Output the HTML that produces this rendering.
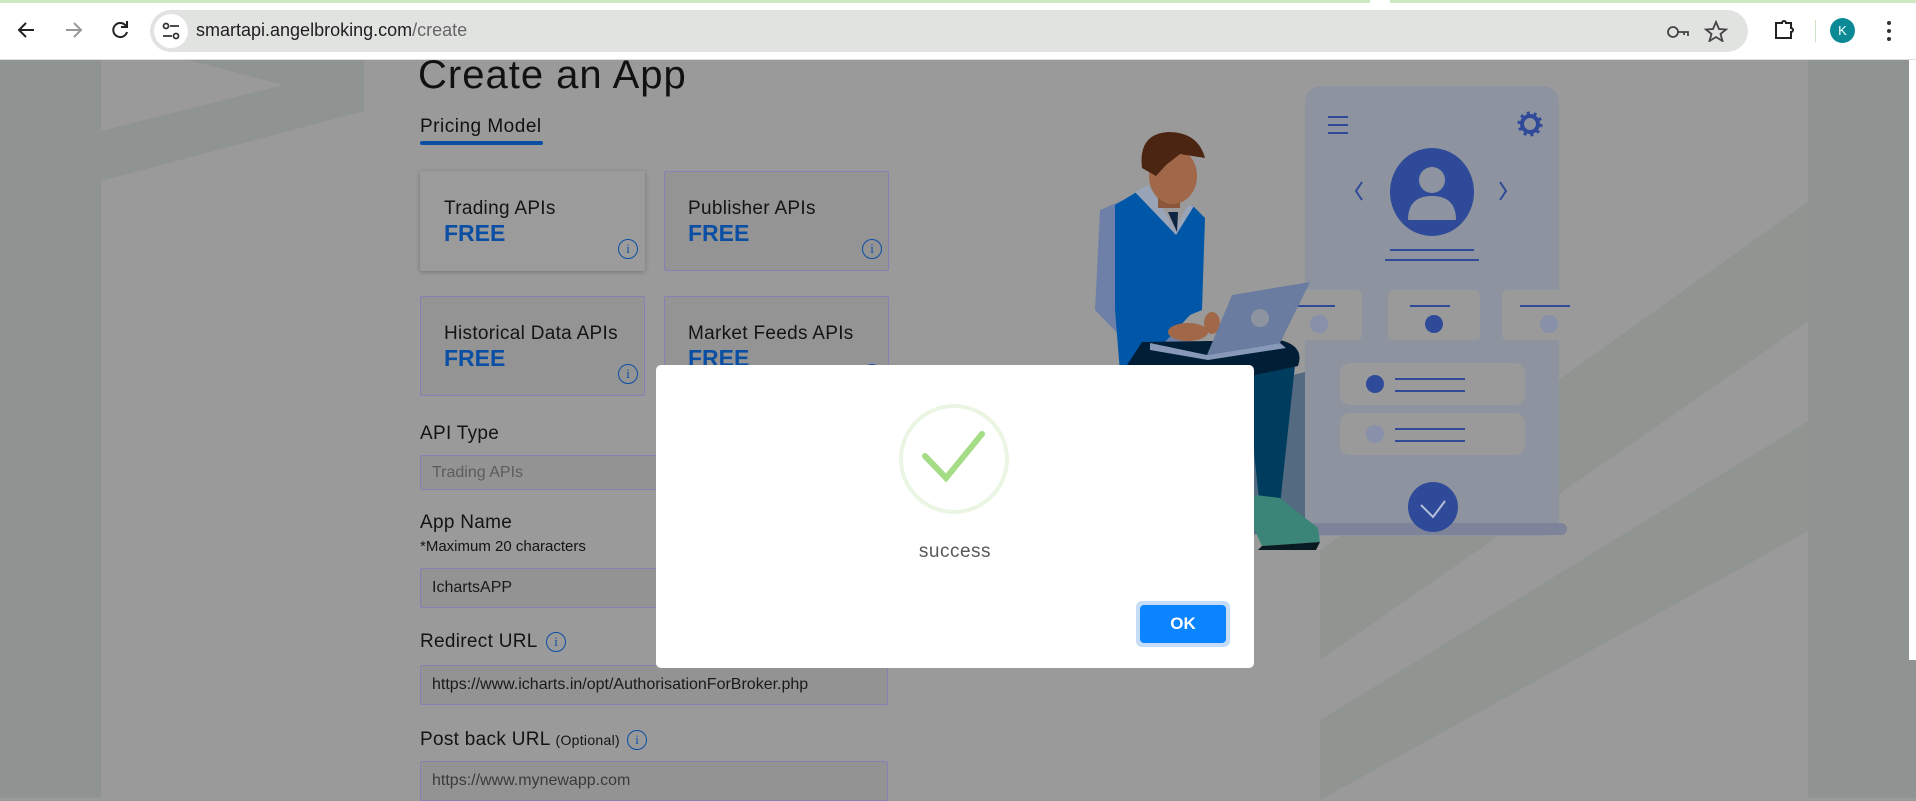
<!DOCTYPE html>
<html><head><meta charset="utf-8"><style>
*{margin:0;padding:0;box-sizing:border-box}
body{width:1916px;height:798px;overflow:hidden;background:#9a9a9a;font-family:"Liberation Sans",sans-serif;position:relative}
.abs{position:absolute}
.card{position:absolute;width:225px;height:100px;border:1px solid #8581b5;background:#949494;border-radius:2px}
.card .t{position:absolute;left:23px;top:26px;font-size:19px;color:#141414;letter-spacing:.3px}
.card .f{position:absolute;left:23px;top:48px;font-size:23px;color:#0b4fa5;font-weight:bold}
.info{position:absolute;width:20px;height:20px;border:1.6px solid #0b4fa5;border-radius:50%;color:#0b4fa5;font-size:13px;text-align:center;line-height:17px;font-family:"Liberation Serif",serif}
.lbl{position:absolute;left:420px;font-size:19px;color:#141414;letter-spacing:.3px}
.inp{position:absolute;left:420px;width:468px;height:40px;border:1px solid #8581b5;background:#939393;border-radius:2px;font-size:16px;color:#1a1a1a;padding-left:11px;line-height:38px}
</style></head><body>
<div class="abs" style="left:0;top:60px;width:101px;height:738px;background:#8f9391"></div>
<svg class="abs" style="left:0;top:0" width="400" height="200"><polygon points="185,59 364,59 364,111 101,181 101,131 283,85" fill="#8f9391"/></svg>
<div class="abs" style="left:1808px;top:60px;width:108px;height:738px;background:#8f9391"></div>
<svg class="abs" style="left:1240px;top:200px" width="570" height="600"><polygon points="80,350 570,0 570,120 80,460" fill="#919592"/><polygon points="80,520 570,220 570,330 80,600" fill="#919592"/></svg>

<div class="abs" style="left:0;top:0;width:1916px;height:60px;background:#fff;border-bottom:1px solid #ddd"></div>
<div class="abs" style="left:0;top:0;width:1370px;height:3px;background:#cfe8c4"></div>
<div class="abs" style="left:1390px;top:0;width:526px;height:3px;background:#cfe8c4"></div>
<svg class="abs" style="left:14px;top:18px" width="130" height="24" fill="none" stroke-width="2">
<path d="M20 12H6M12 5l-7 7 7 7" stroke="#222"/>
<path d="M52 12h14M60 5l7 7-7 7" stroke="#999"/>
<path d="M112 8a7 7 0 1 0 1 6M113 3v6h-6" stroke="#222"/></svg>
<div class="abs" style="left:150px;top:10px;width:1598px;height:42px;background:#e1e3e1;border-radius:21px"></div>
<div class="abs" style="left:154px;top:14px;width:34px;height:34px;background:#fff;border-radius:50%"></div>
<svg class="abs" style="left:162px;top:22px" width="18" height="18" fill="none" stroke="#333" stroke-width="1.8"><circle cx="4" cy="4" r="2.5"/><path d="M8 4h9M1 14h9"/><circle cx="14" cy="14" r="2.5"/></svg>
<div class="abs" style="left:196px;top:20px;font-size:18px;color:#1f1f1f">smartapi.angelbroking.com<span style="color:#666">/create</span></div>
<svg class="abs" style="left:1666px;top:20px" width="110" height="22" fill="none" stroke="#444" stroke-width="1.8">
<circle cx="7" cy="12" r="5"/><path d="M12 12h10v4M18 12v3"/>
<path d="M50 2l3 7 7 .5-5.5 4.5 2 7-6.5-4-6.5 4 2-7L40 9.5l7-.5z"/></svg>
<svg class="abs" style="left:1772px;top:18px" width="24" height="24" fill="none" stroke="#222" stroke-width="2"><path d="M4 5h6a2 2 0 0 1 4 0h5v5a2 2 0 0 1 0 4v6H4z"/></svg>
<div class="abs" style="left:1815px;top:20px;width:1px;height:22px;background:#cfe3c4"></div>
<div class="abs" style="left:1830px;top:18px;width:25px;height:25px;border-radius:50%;background:#0b8a96;color:#fff;font-size:13px;text-align:center;line-height:25px">K</div>
<svg class="abs" style="left:1884px;top:18px" width="10" height="26" fill="#333"><circle cx="5" cy="5" r="2"/><circle cx="5" cy="13" r="2"/><circle cx="5" cy="21" r="2"/></svg>
<div class="abs" style="left:1909px;top:60px;width:7px;height:600px;background:#fff"></div>

<div class="abs" style="left:418px;top:53px;font-size:40px;color:#111;letter-spacing:1px">Create an App</div>
<div class="abs" style="left:420px;top:116px;font-size:19px;color:#111;letter-spacing:.5px">Pricing Model</div>
<div class="abs" style="left:420px;top:141px;width:123px;height:4px;background:#0b4fa5;border-radius:2px"></div>
<div class="card" style="left:420px;top:171px;background:#9b9b9b;border-color:#9b9b9b;box-shadow:0 1px 5px rgba(0,0,0,.25)"><div class="t">Trading APIs</div><div class="f">FREE</div><div class="info" style="left:197px;top:67px">i</div></div>
<div class="card" style="left:664px;top:171px"><div class="t">Publisher APIs</div><div class="f">FREE</div><div class="info" style="left:197px;top:67px">i</div></div>
<div class="card" style="left:420px;top:296px"><div class="t">Historical Data APIs</div><div class="f">FREE</div><div class="info" style="left:197px;top:67px">i</div></div>
<div class="card" style="left:664px;top:296px"><div class="t">Market Feeds APIs</div><div class="f">FREE</div><div class="info" style="left:197px;top:67px">i</div></div>
<div class="lbl" style="top:423px">API Type</div>
<div class="inp" style="top:455px;height:35px;line-height:33px;color:#5c5c5c">Trading APIs</div>
<div class="lbl" style="top:512px">App Name</div>
<div class="abs" style="left:420px;top:538px;font-size:15px;color:#141414">*Maximum 20 characters</div>
<div class="inp" style="top:568px">IchartsAPP</div>
<div class="lbl" style="top:631px">Redirect URL</div>
<div class="info" style="left:546px;top:632px">i</div>
<div class="inp" style="top:665px">https://www.icharts.in/opt/AuthorisationForBroker.php</div>
<div class="lbl" style="top:729px">Post back URL <span style="font-size:14px">(Optional)</span></div>
<div class="info" style="left:627px;top:730px">i</div>
<div class="inp" style="top:761px;color:#3a3a3a">https://www.mynewapp.com</div>

<svg class="abs" style="left:1090px;top:80px" width="480" height="480">
<rect x="215" y="6" width="254" height="450" rx="16" fill="#8e93a0"/>
<rect x="215" y="443" width="262" height="12" rx="6" fill="#7d849a"/>
<g stroke="#2f4a99" stroke-width="2"><path d="M238 37h20M238 45h20M238 53h20"/></g>
<circle cx="440" cy="44" r="8" fill="none" stroke="#2f4a99" stroke-width="4"/>
<circle cx="440" cy="44" r="11" fill="none" stroke="#2f4a99" stroke-width="3" stroke-dasharray="3 3.9"/>
<ellipse cx="342" cy="112" rx="42" ry="44" fill="#2f4a99"/>
<circle cx="342" cy="100" r="13" fill="#8e93a0"/><path d="M318 140q0-24 24-24q24 0 24 24z" fill="#8e93a0"/>
<path d="M272 102l-6 9 6 9M410 102l6 9-6 9" stroke="#2f4a99" stroke-width="2" fill="none"/>
<path d="M300 170h84M295 180h94" stroke="#2f4a99" stroke-width="2"/>
<rect x="180" y="210" width="92" height="50" rx="5" fill="#9a9a9a"/><rect x="298" y="210" width="92" height="50" rx="5" fill="#9a9a9a"/><rect x="412" y="210" width="92" height="50" rx="5" fill="#9a9a9a"/>
<circle cx="229" cy="244" r="9" fill="#8890aa"/><circle cx="344" cy="244" r="9" fill="#2f4a99"/><circle cx="459" cy="244" r="9" fill="#8890aa"/>
<path d="M200 226h45M320 226h40M430 226h50" stroke="#2f4a99" stroke-width="2"/>
<rect x="250" y="283" width="185" height="42" rx="10" fill="#9a9a9a"/><rect x="250" y="333" width="185" height="42" rx="10" fill="#9a9a9a"/>
<circle cx="285" cy="304" r="9" fill="#2f4a99"/><circle cx="285" cy="354" r="9" fill="#8890aa"/>
<path d="M305 299h70M305 311h70M305 349h70M305 361h70" stroke="#2f4a99" stroke-width="2"/>
<circle cx="343" cy="427" r="25" fill="#2f4a99"/><path d="M331 425l12 12 12-16" stroke="#b8bfd8" stroke-width="2" fill="none"/>
</svg>
<svg class="abs" style="left:1080px;top:110px" width="260" height="440">
<polygon points="172,275 225,262 225,415 172,425" fill="#536a80"/>
<polygon points="165,260 215,255 200,395 180,398" fill="#003c5e"/>
<path d="M175,385 L200,388 L238,418 L240,432 L182,436 L170,410 Z" fill="#3a8578"/>
<path d="M182,436 L240,432 L236,440 L178,440 Z" fill="#0a1a22"/>
<polygon points="20,100 55,85 62,205 80,212 112,222 112,240 40,226 15,200" fill="#6f80a8"/>
<polygon points="35,95 60,80 95,120 112,95 125,108 122,200 110,205 85,232 40,262 35,200" fill="#0057a8"/>
<polygon points="55,82 68,75 95,118 108,95 114,96 96,125" fill="#9aa4b8"/>
<polygon points="88,102 98,102 97,122" fill="#0d2342"/>
<rect x="78" y="72" width="22" height="26" fill="#8a573c"/>
<ellipse cx="93" cy="66" rx="24" ry="28" fill="#a06848"/>
<path d="M62,58 Q58,24 88,22 Q118,22 125,48 L100,44 L86,55 L76,66 Z" fill="#4b2412"/>
<path d="M45,258 L62,232 L200,230 Q225,236 218,256 L170,266 L130,262 L70,264 Z" fill="#001e36"/>
<ellipse cx="108" cy="222" rx="20" ry="9" fill="#a06848"/>
<ellipse cx="132" cy="213" rx="8" ry="11" fill="#a06848"/>
<polygon points="152,185 230,172 200,233 127,245" fill="#6a7ca0"/>
<circle cx="180" cy="208" r="9" fill="#8e93a0"/>
<polygon points="70,233 127,245 200,233 206,238 128,250 70,240" fill="#8898b8"/>
</svg>

<div class="abs" style="left:656px;top:365px;width:598px;height:303px;background:#fff;border-radius:5px"></div>
<svg class="abs" style="left:898px;top:403px" width="112" height="112"><circle cx="56" cy="56" r="53" fill="none" stroke="#eaf6e3" stroke-width="4"/><path d="M27 53l21 22 36-44" fill="none" stroke="#a5dc86" stroke-width="6" stroke-linecap="round"/></svg>
<div class="abs" style="left:656px;top:541px;width:598px;text-align:center;font-size:19px;color:#595959;letter-spacing:.5px">success</div>
<div class="abs" style="left:1136px;top:601px;width:94px;height:46px;border-radius:6px;background:#c5dcf7"></div>
<div class="abs" style="left:1140px;top:605px;width:86px;height:38px;border-radius:4px;background:#0a84ff;color:#fff;font-weight:bold;font-size:17px;text-align:center;line-height:38px">OK</div>
</body></html>
